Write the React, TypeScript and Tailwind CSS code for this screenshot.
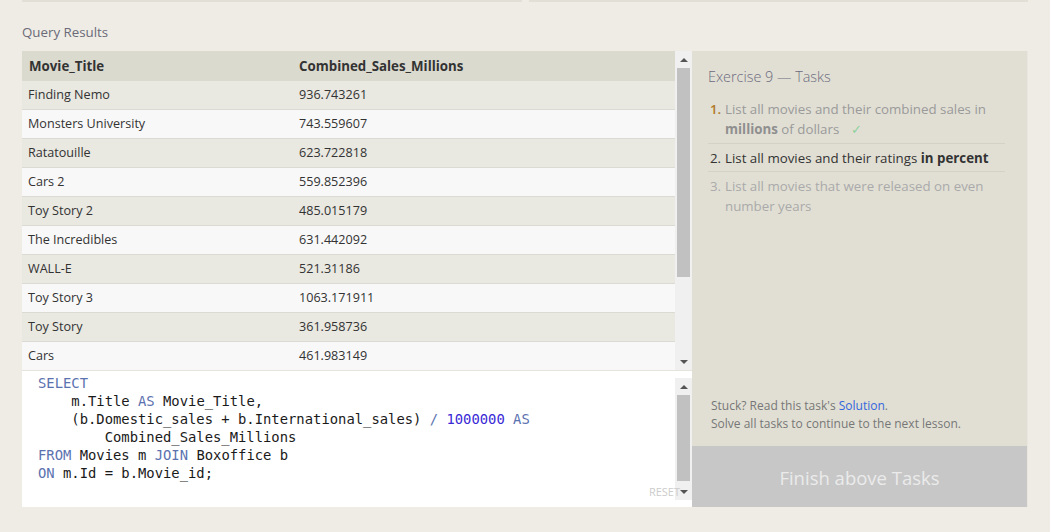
import React from "react";

const rows: [string, string][] = [
  ["Finding Nemo", "936.743261"],
  ["Monsters University", "743.559607"],
  ["Ratatouille", "623.722818"],
  ["Cars 2", "559.852396"],
  ["Toy Story 2", "485.015179"],
  ["The Incredibles", "631.442092"],
  ["WALL-E", "521.31186"],
  ["Toy Story 3", "1063.171911"],
  ["Toy Story", "361.958736"],
  ["Cars", "461.983149"],
];

const K = ({ children }: { children: React.ReactNode }) => (
  <span className="text-[#5b72b0]">{children}</span>
);
const N = ({ children }: { children: React.ReactNode }) => (
  <span className="text-[#3a2ad6]">{children}</span>
);

function UpArrow() {
  return (
    <div className="h-[17px] flex items-center justify-center">
      <div className="w-0 h-0 border-l-[4px] border-r-[4px] border-b-[4px] border-l-transparent border-r-transparent border-b-[#555]" />
    </div>
  );
}
function DownArrow() {
  return (
    <div className="h-[17px] flex items-center justify-center">
      <div className="w-0 h-0 border-l-[4px] border-r-[4px] border-t-[4px] border-l-transparent border-r-transparent border-t-[#555]" />
    </div>
  );
}

export default function App() {
  return (
    <div
      className="w-[1050px] h-[532px] bg-[#efece5] overflow-hidden"
      style={{ fontFamily: '"Open Sans", "Noto Sans", sans-serif' }}
    >
      <div className="flex gap-[7px] pl-[22px] pr-[22px]">
        <div className="w-[500px] h-[2px] bg-[#e2dfd6]" />
        <div className="flex-1 h-[2px] bg-[#e2dfd6]" />
      </div>
      <div className="pl-[22px] pt-[21px] h-[49px] text-[13.3px] text-[#6a6a78] leading-[18px]">
        Query Results
      </div>
      <div className="flex pl-[22px]">
        <div className="w-[670px] flex flex-col">
          {/* table */}
          <div className="h-[319px] flex bg-[#f8f8f8]">
            <div className="w-[653px] overflow-hidden">
              <div className="h-[30px] pt-[1px] bg-[#dbdacf] flex items-center text-[13.3px] font-bold text-[#333]">
                <div className="w-[277px] pl-[7px]">Movie_Title</div>
                <div>Combined_Sales_Millions</div>
              </div>
              {rows.map(([t, v], i) => (
                <div
                  key={t}
                  className={
                    "h-[29px] pt-[1px] flex items-center text-[12.6px] text-[#333] border-b border-[#dcdbd3] " +
                    (i % 2 === 0 ? "bg-[#e9e8e1]" : "bg-[#f8f8f8]")
                  }
                >
                  <div className="w-[277px] pl-[6px]">{t}</div>
                  <div>{v}</div>
                </div>
              ))}
            </div>
            <div className="w-[17px] bg-[#f0f0f0] flex flex-col">
              <UpArrow />
              <div className="mx-[2px] h-[209px] bg-[#c1c1c1]" />
              <div className="flex-1" />
              <DownArrow />
            </div>
          </div>
          {/* editor */}
          <div className="h-[137px] bg-white border-t border-[#e6e4da] flex">
            <div
              className="flex-1 pl-[16px] pt-[3px] text-[13.85px] leading-[18px] text-[#1a1a1a] whitespace-pre"
              style={{ fontFamily: '"DejaVu Sans Mono", "Liberation Mono", monospace' }}
            >
              <div><K>SELECT</K></div>
              <div>{"    m.Title "}<K>AS</K>{" Movie_Title,"}</div>
              <div>{"    (b.Domestic_sales + b.International_sales) "}<K>/</K>{" "}<N>1000000</N>{" "}<K>AS</K></div>
              <div>{"        Combined_Sales_Millions"}</div>
              <div><K>FROM</K>{" Movies m "}<K>JOIN</K>{" Boxoffice b"}</div>
              <div><K>ON</K>{" m.Id = b.Movie_id;"}</div>
            </div>
            <div className="w-[17px] pt-[7px] pb-[7px] flex flex-col relative">
              <div className="bg-[#f0f0f0] flex flex-col h-full">
                <UpArrow />
                <div className="mx-[2px] h-[86px] bg-[#c1c1c1]" />
                <div className="flex-1" />
                <DownArrow />
              </div>
              <div className="absolute right-[12px] bottom-[7px] text-[11px] leading-[17px] text-[#cccccc]">
                RESET
              </div>
            </div>
          </div>
        </div>
        {/* right panel */}
        <div className="w-[336px] h-[456px] bg-[#e1dfd4] border-r border-[#e8e6de] flex flex-col">
          <div className="px-[16px] pt-[17px] flex-1">
            <div className="text-[14.4px] leading-[18px] text-[#6b6a7d] font-light">Exercise 9 — Tasks</div>
            <div className="mt-[13px] text-[13.3px] leading-[20px]">
              <div className="flex pb-[4px] border-b border-[#d4d2c8] mr-[6px]">
                <div className="w-[17px] shrink-0 pl-[2px] text-[#b07a2a] font-semibold">1.</div>
                <div className="text-[#9a9a9a]">
                  List all movies and their combined sales in <b className="font-bold text-[#8f8f8f]">millions</b> of dollars
                  <span className="ml-[12px] text-[#8fd19e]">✓</span>
                </div>
              </div>
              <div className="flex pt-[4px] pb-[3px] border-b border-[#d4d2c8] mr-[6px]">
                <div className="w-[17px] shrink-0 pl-[2px] text-[#333]">2.</div>
                <div className="text-[#333]">
                  List all movies and their ratings <b className="font-bold">in percent</b>
                </div>
              </div>
              <div className="flex pt-[4px] mr-[6px]">
                <div className="w-[17px] shrink-0 pl-[2px] text-[#aaa]">3.</div>
                <div className="text-[#aaa]">List all movies that were released on even number years</div>
              </div>
            </div>
          </div>
          <div className="px-[19px] pb-[13px] text-[12px] leading-[18px] text-[#777]">
            <div>
              Stuck? Read this task's <span className="text-[#3366dd]">Solution</span>.
            </div>
            <div>Solve all tasks to continue to the next lesson.</div>
          </div>
          <div className="h-[61px] pt-[3px] bg-[#c7c7c7] flex items-center justify-center text-[18.5px] text-[#ebebeb]">
            Finish above Tasks
          </div>
        </div>
      </div>
    </div>
  );
}
